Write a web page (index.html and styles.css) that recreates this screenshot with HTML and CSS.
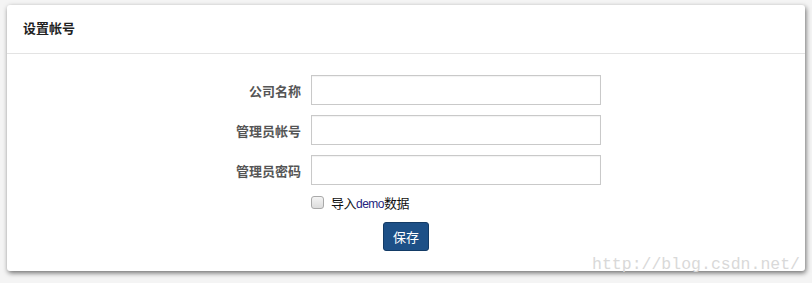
FILE: index.html
```html
<!DOCTYPE html>
<html lang="zh">
<head>
    <meta charset="UTF-8">
    <title>设置帐号</title>
    <link rel="stylesheet" href="styles.css">
</head>
<body>
    <div class="panel">
        <div class="panel-head">设置帐号</div>
        <form class="setup">
            <div class="row">
                <label class="lebel">公司名称</label>
                <input type="text" class="field">
            </div>
            <div class="row">
                <label class="lebel">管理员帐号</label>
                <input type="text" class="field">
            </div>
            <div class="row">
                <label class="lebel">管理员密码</label>
                <input type="password" class="field">
            </div>
            <div class="check-row">
                <span class="box"></span>
                <span class="check-text">导入<span class="demo">demo</span>数据</span>
            </div>
            <div class="btn-row">
                <button type="button" class="save">保存</button>
            </div>
        </form>
        <span class="mark">http://blog.csdn.net/</span>
    </div>
</body>
</html>
```

FILE: styles.css
```css
*{
    margin: 0px;
    padding: 0px;
    box-sizing: border-box;
}
body{
    background-color: #f4f4f4;
    padding: 5px 7px;
    font-family: "Liberation Sans", "Noto Sans CJK SC", sans-serif;
    height: 283px;
    overflow: hidden;
}
.panel{
    position: relative;
    width: 798px;
    height: 266px;
    background-color: #fff;
    border-radius: 3px;
    box-shadow: 1px 2px 5px rgba(0, 0, 0, 0.55);
}
.panel-head{
    height: 49px;
    padding-left: 16px;
    line-height: 48px;
    font-size: 13px;
    font-weight: bold;
    color: #222;
    border-bottom: 1px solid #e3e3e3;
}
.setup{
    padding-top: 21px;
}
.row{
    display: flex;
    align-items: center;
    height: 30px;
    margin-bottom: 10px;
}
.lebel{
    width: 294px;
    text-align: right;
    font-size: 13px;
    font-weight: bold;
    color: #555;
    margin-right: 10px;
}
.field{
    width: 290px;
    height: 30px;
    border: 1px solid #c9c9c9;
    box-shadow: inset 0 1px 1px rgba(0, 0, 0, 0.05);
    background-color: #fff;
}
.check-row{
    display: flex;
    align-items: center;
    padding-left: 304px;
    height: 16px;
    margin-top: -1px;
}
.box{
    width: 13px;
    height: 13px;
    border: 1px solid #a9a9a9;
    border-radius: 3px;
    background: linear-gradient(#f4f4f4, #dcdcdc);
    margin-right: 7px;
}
.check-text{
    font-size: 13px;
    color: #111;
    letter-spacing: -0.5px;
}
.demo{
    color: #23237e;
    font-size: 12px;
}
.btn-row{
    padding-left: 376px;
    margin-top: 12px;
}
.save{
    width: 46px;
    height: 29px;
    background-color: #1d5087;
    border: 1px solid #133b66;
    border-radius: 3px;
    color: #fff;
    font-size: 13px;
    font-family: "Liberation Sans", "Noto Sans CJK SC", sans-serif;
}
.mark{
    position: absolute;
    right: 5px;
    bottom: -3px;
    font-family: "Liberation Mono", monospace;
    font-size: 16.5px;
    color: #d9d9d9;
}
```
